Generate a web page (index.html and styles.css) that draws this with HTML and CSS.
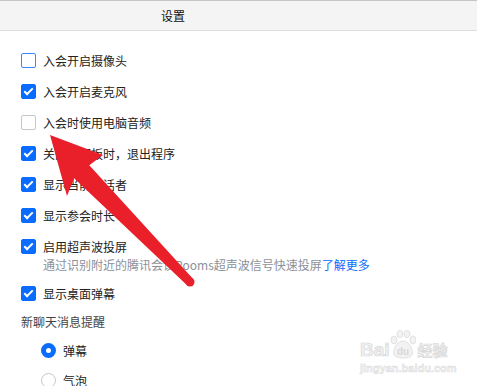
FILE: index.html
```html
<!DOCTYPE html>
<html lang="zh-CN">
<head>
  <meta charset="UTF-8" />
  <title>设置</title>
  <link rel="stylesheet" href="styles.css">
</head>
<body>
  <div class="window">
    <div class="titlebar">设置</div>

    <div class="settings">
      <label class="row"><span class="box focus"></span>入会开启摄像头</label>
      <label class="row"><span class="box checked"></span>入会开启麦克风</label>
      <label class="row"><span class="box"></span>入会时使用电脑音频</label>
      <label class="row"><span class="box checked"></span>关闭主面板时，退出程序</label>
      <label class="row"><span class="box checked"></span>显示当前讲话者</label>
      <label class="row"><span class="box checked"></span>显示参会时长</label>
      <label class="row tight"><span class="box checked"></span>启用超声波投屏</label>
      <p class="desc">通过识别附近的腾讯会议Rooms超声波信号快速投屏<a href="#">了解更多</a></p>
      <label class="row"><span class="box checked"></span>显示桌面弹幕</label>

      <div class="section">新聊天消息提醒</div>
      <label class="radio-row"><span class="radio on"></span>弹幕</label>
      <label class="radio-row"><span class="radio"></span>气泡</label>
    </div>
  </div>

  <!-- red arrow drawn over the screenshot -->
  <svg class="arrow" width="477" height="386" viewBox="0 0 477 386">
    <polygon points="50,135 103,155 89.3,165.2 193.2,278.9 186.8,285.1 74.1,178.2 67,196" fill="#e9202a"/>
    <circle cx="190" cy="282" r="4.5" fill="#e9202a"/>
  </svg>

  <!-- watermark -->
  <div class="watermark">
    <div class="wm-logo">
      <span class="wm-bai">Bai</span>
      <svg width="26" height="30" viewBox="0 0 26 30">
        <g fill="#f2f2f2" stroke="#dcdcdc" stroke-width="0.8">
          <ellipse cx="4" cy="10" rx="3" ry="4"/>
          <ellipse cx="10" cy="4" rx="3" ry="3.6"/>
          <ellipse cx="17" cy="4" rx="3" ry="3.6"/>
          <ellipse cx="23" cy="10" rx="3" ry="4"/>
          <path d="M13 11 C7 11 2 20 4 25 C6 29 20 29 22 25 C24 20 19 11 13 11 Z"/>
        </g>
        <text x="13" y="25" text-anchor="middle" font-size="10" font-weight="bold" fill="#d8d8d8" font-family="Liberation Sans, sans-serif">du</text>
      </svg>
      <span class="wm-jy">经验</span>
    </div>
    <div class="wm-url">jingyan.baidu.com</div>
  </div>
</body>
</html>
```

FILE: styles.css
```css
body {
  margin: 0;
  background: #fff;
  font-family: "Noto Sans CJK SC", "Noto Sans", sans-serif;
  font-size: 12px;
  color: #222;
  overflow: hidden;
}
.window {
  width: 477px;
  height: 386px;
  border-top: 1px solid #c4c4c4;
  box-sizing: border-box;
}
.titlebar {
  height: 29px;
  line-height: 29px;
  background: #f4f4f4;
  border-bottom: 1px solid #dedede;
  padding-left: 161px;
  font-size: 12px;
  color: #111;
}
.settings {
  padding: 18px 0 0 21px;
}
.row {
  display: flex;
  align-items: center;
  gap: 7px;
  height: 22px;
  margin-bottom: 9px;
}
.row.tight {
  margin-bottom: 0;
}
.box {
  width: 13px;
  height: 13px;
  border: 1px solid #c3c7cf;
  border-radius: 2px;
  background: #fff;
  position: relative;
}
.box.focus {
  border-color: #3b87ff;
}
.box.checked {
  background: #0a6cff;
  border-color: #0a6cff;
}
.box.checked::after {
  content: "";
  position: absolute;
  left: 4px;
  top: 1px;
  width: 3px;
  height: 7px;
  border: solid #fff;
  border-width: 0 2px 2px 0;
  transform: rotate(45deg);
}
.desc {
  margin: 0 0 9px 22px;
  line-height: 16px;
  color: #8b9099;
}
.desc a {
  color: #0a6cff;
  text-decoration: none;
}
.section {
  line-height: 18px;
  color: #444;
  margin-bottom: 8px;
}
.radio-row {
  display: flex;
  align-items: center;
  gap: 7px;
  height: 22px;
  margin: 0 0 8px 20px;
}
.radio {
  width: 13px;
  height: 13px;
  border: 1px solid #c3c7cf;
  border-radius: 50%;
  box-sizing: content-box;
}
.radio.on {
  width: 5px;
  height: 5px;
  border: 5px solid #0a6cff;
}
.arrow {
  position: absolute;
  left: 0;
  top: 0;
  pointer-events: none;
}
.watermark {
  position: absolute;
  left: 360px;
  top: 330px;
  color: #f2f2f2;
  -webkit-text-stroke: 0.7px #d6d6d6;
  font-family: "Liberation Sans", sans-serif;
}
.wm-logo {
  display: flex;
  align-items: flex-end;
  height: 30px;
}
.wm-bai {
  font-size: 19px;
  font-weight: bold;
  line-height: 20px;
}
.wm-jy {
  font-family: "Noto Sans CJK SC", sans-serif;
  font-size: 15px;
  font-weight: bold;
  line-height: 20px;
  margin-left: 2px;
}
.wm-url {
  font-size: 11px;
  font-weight: bold;
  margin-top: 2px;
  -webkit-text-stroke: 0.4px #d6d6d6;
}
```
